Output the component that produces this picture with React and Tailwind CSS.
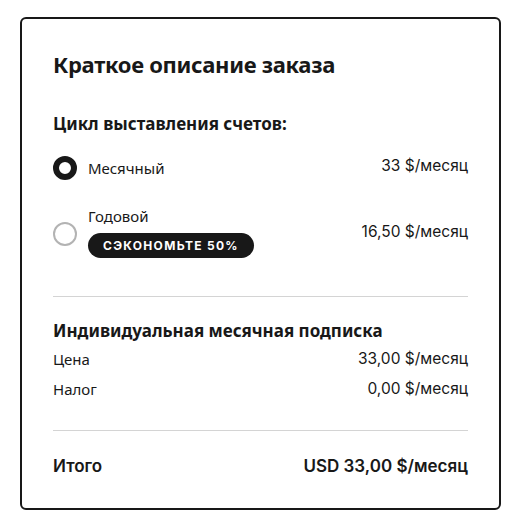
export default function App() {
  const sans = { fontFamily: '"Noto Sans", "Open Sans", sans-serif' };
  return (
    <div className="w-[518px] h-[524px] bg-white pt-[17px] pl-[20px]" style={sans}>
      <div className="w-[481px] h-[493px] border-2 border-[#181818] rounded-[6px] px-[31px] pt-[27px] text-[#181818]">
        <h2 className="text-[22px] font-bold leading-[36px] tracking-[-0.3px]">Краткое описание заказа</h2>

        <div className="mt-[30px] text-[17px] font-bold leading-[24px]">Цикл выставления счетов:</div>

        {/* Monthly */}
        <div className="mt-[20px] flex items-center justify-between h-[24px]">
          <div className="flex items-center gap-[11px]">
            <span className="w-[24px] h-[24px] rounded-full border-[6px] border-[#181818] bg-white" />
            <span className="text-[15px] leading-[20px]">Месячный</span>
          </div>
          <span className="text-[15.5px] font-['Inter'] -mt-[5px]">33 $/месяц</span>
        </div>

        {/* Yearly */}
        <div className="mt-[26px] flex items-center justify-between">
          <div className="flex items-center gap-[11px]">
            <span className="w-[24px] h-[24px] rounded-full border-2 border-[#b3b3b3] mt-[3px]" />
            <div className="flex flex-col">
              <span className="text-[15px] leading-[20px]">Годовой</span>
              <span className="mt-[7px] h-[25px] px-[15px] rounded-full bg-[#181818] text-white text-[12px] font-bold tracking-[1.3px] flex items-center font-['Inter']">СЭКОНОМЬТЕ 50%</span>
            </div>
          </div>
          <span className="text-[15.5px] font-['Inter']">16,50 $/месяц</span>
        </div>

        <div className="mt-[38px] h-px bg-[#d4d4d4]" />

        <div className="mt-[22px] text-[17px] font-bold leading-[24px]">Индивидуальная месячная подписка</div>
        <div className="mt-[6px] flex justify-between text-[15px] leading-[20px]">
          <span>Цена</span>
          <span className="font-['Inter'] text-[15.5px]">33,00 $/месяц</span>
        </div>
        <div className="mt-[10px] flex justify-between text-[15px] leading-[20px]">
          <span>Налог</span>
          <span className="font-['Inter'] text-[15.5px]">0,00 $/месяц</span>
        </div>

        <div className="mt-[31px] h-px bg-[#d4d4d4]" />

        <div className="mt-[24px] flex justify-between text-[17px] font-semibold leading-[22px] font-['Inter']">
          <span>Итого</span>
          <span>USD 33,00 $/месяц</span>
        </div>
      </div>
    </div>
  );
}
